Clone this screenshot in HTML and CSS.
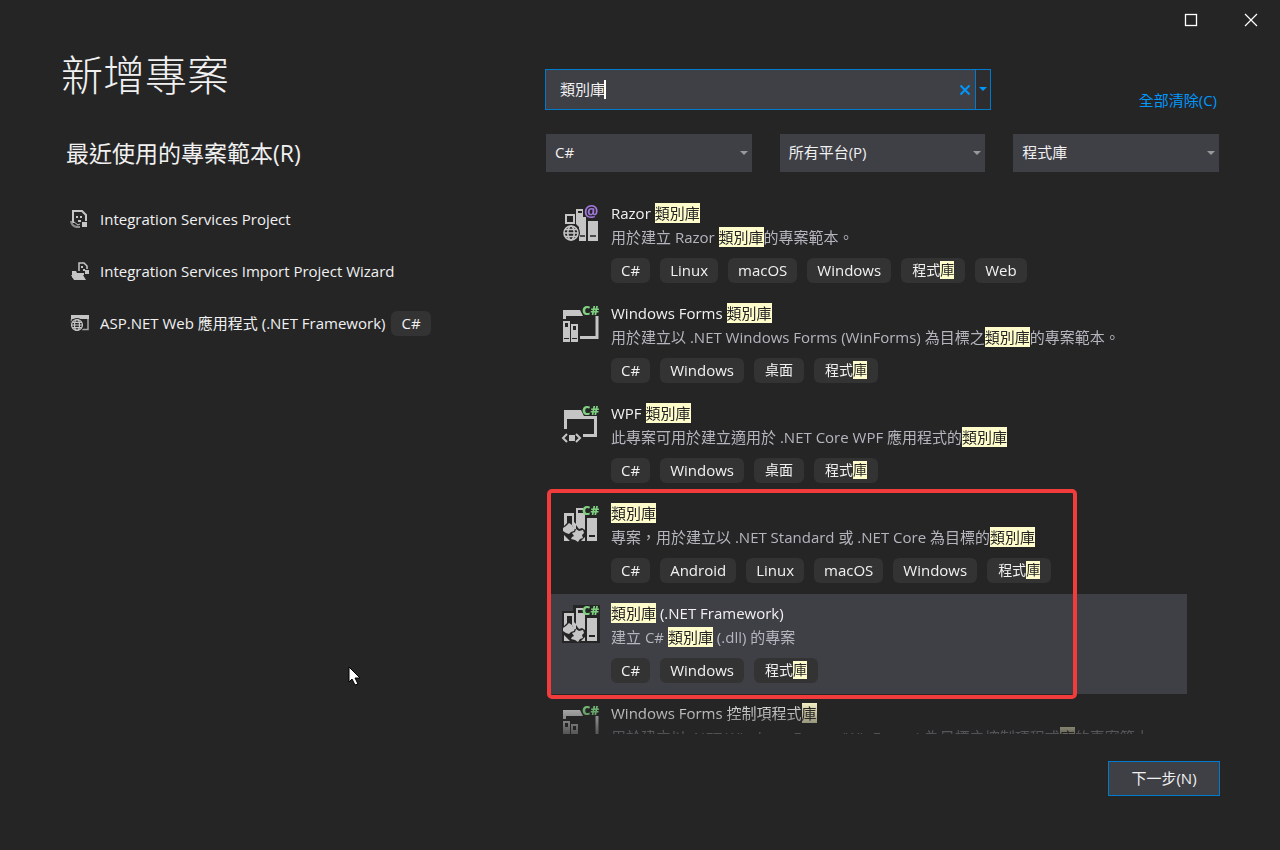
FILE: index.html
```html
<!DOCTYPE html>
<html lang="zh-Hant">
<head>
    <meta charset="UTF-8">
    <meta name="viewport" content="width=device-width, initial-scale=1.0">
    <title>新增專案</title>
    <link rel="stylesheet" href="styles.css">
</head>
<body>
    <!-- Shared icon parts -->
    <svg class="defs" aria-hidden="true">
        <symbol id="books" viewBox="0 0 38 38">
            <path d="M3 9h10v10H3zM5 11v6h6v-6z" fill="#c5c5c5" fill-rule="evenodd"/>
            <path d="M14 4h7v8h3v24h-7V22l-3-3z" fill="#c5c5c5"/>
            <path d="M16 6h4v2h-4z" fill="#252526"/>
            <path d="M26 16h10v20H26z" fill="#c5c5c5"/>
            <path d="M18 31h5M28 31h6" stroke="#252526" stroke-width="1.5"/>
        </symbol>
        <symbol id="globe" viewBox="0 0 18 18">
            <circle cx="9" cy="9" r="9" fill="#252526"/>
            <g fill="none" stroke="#c5c5c5" stroke-width="1.6">
                <circle cx="9" cy="9" r="7"/>
                <ellipse cx="9" cy="9" rx="3.2" ry="7"/>
                <path d="M2 9h14M3 5.500h12M3 12.500h12"/>
            </g>
        </symbol>
        <symbol id="forms" viewBox="0 0 38 38">
            <path d="M1 5h17l3 6H4v3H1z" fill="#c5c5c5"/>
            <path d="M35 11v21.500H18" fill="none" stroke="#c5c5c5" stroke-width="3"/>
            <path d="M1 16h7v21H1zM9 19h7v18H9z" fill="#c5c5c5"/>
            <path d="M3 18h3v4H3zM11 21h3v4h-3zM2 33h5v1H2zM10 33h5v1h-5z" fill="#252526"/>
        </symbol>
        <symbol id="classlib" viewBox="0 0 38 38">
            <path d="M0 6h11V0h27v38H0z" fill="#252526"/>
            <path d="M2 8h10v9l2 2v5h-2l-2-4v-9H5v7l-3 3z" fill="#c5c5c5"/>
            <path d="M14 3h7v2h-5v3h7v17l-3-2-3 1-3-4z" fill="#c5c5c5"/>
            <path d="M25 13h10v23H25z" fill="#c5c5c5"/>
            <path d="M27 31h6" stroke="#252526" stroke-width="2"/>
            <path d="M7 18l3 2 1 2 2 1-1 3-3 1-2 2-3-1-3-2v-3l3-2z" fill="#c5c5c5"/>
            <path d="M14 24l3 2 4-1 1 3-2 2 1 3-3 1-2 3-3-2-4-1 1-2 2-1-2-3 3-1z" fill="#c5c5c5"/>
            <path d="M2 36v-6l6 6zM23 32v4h-4z" fill="#c5c5c5"/>
        </symbol>
    </svg>

    <header class="window-bar">
        <button type="button" aria-label="最大化">
            <svg width="14" height="14" viewBox="0 0 14 14"><rect x="1.500" y="1.500" width="11" height="11" fill="none" stroke="#fff" stroke-width="1.300"/></svg>
        </button>
        <button type="button" aria-label="關閉">
            <svg width="14" height="14" viewBox="0 0 14 14"><path d="M1 1l12 12M13 1L1 13" stroke="#fff" stroke-width="1.200"/></svg>
        </button>
    </header>

    <main class="dialog">
        <section class="recent">
            <h1>新增專案</h1>
            <h2>最近使用的專案範本(R)</h2>
            <ul class="recent-list">
                <li>
                    <svg width="20" height="20" viewBox="0 0 20 20">
                        <path d="M3 14V2h9l4 4v6" fill="none" stroke="#c5c5c5" stroke-width="2"/>
                        <path d="M6 7h2v2H6zM10 7h2v2h-2zM8 11h3v2H8z" fill="#c5c5c5"/>
                        <path d="M1 12c1 6 5 6 9 6" fill="none" stroke="#8d8d8d" stroke-width="2"/>
                        <path d="M4 13l4 3 2-1" fill="none" stroke="#c5c5c5"/>
                        <path d="M12 13h5v5h-5z" fill="#c5c5c5"/>
                    </svg>
                    <a href="#">Integration Services Project</a>
                </li>
                <li>
                    <svg width="20" height="20" viewBox="0 0 20 20">
                        <path d="M9 10V2h5l3 3v3" fill="none" stroke="#c5c5c5" stroke-width="1.500"/>
                        <path d="M11 5h2v2h-2zM13 8h2v2h-2zM15 9h4v4h-4z" fill="#c5c5c5"/>
                        <path d="M2 10h4l1 2h7v2H5l-3 3zM1 14h12l3 5H4z" fill="#c5c5c5"/>
                    </svg>
                    <a href="#">Integration Services Import Project Wizard</a>
                </li>
                <li>
                    <svg width="20" height="20" viewBox="0 0 20 20">
                        <path d="M1 2h18v4H1z" fill="#c5c5c5"/>
                        <path d="M1.500 6v5M18 6v10.500h-6" fill="none" stroke="#a5a5a5" stroke-width="1.500"/>
                        <use href="#globe" x="0" y="5" width="14" height="14"/>
                    </svg>
                    <a href="#">ASP.NET Web 應用程式 (.NET Framework)</a>
                    <span class="tag">C#</span>
                </li>
            </ul>
        </section>

        <section class="browse">
            <div class="search-row">
                <div class="search-box">
                    <input type="text" value="類別庫" size="6" aria-label="搜尋範本">
                    <span class="caret"></span>
                    <button type="button" class="clear-text" aria-label="清除">
                        <svg width="12" height="12" viewBox="0 0 12 12"><path d="M1.500 1.500l9 9M10.500 1.500l-9 9" stroke="#0097fb" stroke-width="2"/></svg>
                    </button>
                    <button type="button" class="history" aria-label="搜尋記錄">
                        <svg width="8" height="5" viewBox="0 0 8 5"><path d="M0 0h8L4 4z" fill="#0097fb"/></svg>
                    </button>
                </div>
                <a class="clear-all" href="#">全部清除(C)</a>
            </div>

            <div class="filters">
                <div class="filter">
                    <select aria-label="語言"><option>C#</option></select>
                    <svg width="8" height="5" viewBox="0 0 8 5"><path d="M0 0h8L4 4z" fill="#999"/></svg>
                </div>
                <div class="filter">
                    <select aria-label="平台"><option>所有平台(P)</option></select>
                    <svg width="8" height="5" viewBox="0 0 8 5"><path d="M0 0h8L4 4z" fill="#999"/></svg>
                </div>
                <div class="filter">
                    <select aria-label="專案類型"><option>程式庫</option></select>
                    <svg width="8" height="5" viewBox="0 0 8 5"><path d="M0 0h8L4 4z" fill="#999"/></svg>
                </div>
            </div>

            <div class="results">
                <ul class="template-list">
                    <li class="template">
                        <svg class="icon" viewBox="0 0 38 38">
                            <use href="#books" width="38" height="38"/>
                            <use href="#globe" x="0" y="19" width="18" height="18"/>
                            <circle cx="30" cy="7" r="8" fill="#252526"/>
                            <text class="at-text" x="22" y="12" fill="#a179dc">@</text>
                        </svg>
                        <div class="info">
                            <h3>Razor <mark>類別庫</mark></h3>
                            <p>用於建立 Razor <mark>類別庫</mark>的專案範本。</p>
                            <div class="tags">
                                <span class="tag">C#</span>
                                <span class="tag">Linux</span>
                                <span class="tag">macOS</span>
                                <span class="tag">Windows</span>
                                <span class="tag zh">程式<mark>庫</mark></span>
                                <span class="tag">Web</span>
                            </div>
                        </div>
                    </li>
                    <li class="template">
                        <svg class="icon" viewBox="0 0 38 38">
                            <use href="#forms" width="38" height="38"/>
                            <text class="badge-text" x="20" y="10" fill="#7fd081">C#</text>
                        </svg>
                        <div class="info">
                            <h3>Windows Forms <mark>類別庫</mark></h3>
                            <p>用於建立以 .NET Windows Forms (WinForms) 為目標之<mark>類別庫</mark>的專案範本。</p>
                            <div class="tags">
                                <span class="tag">C#</span>
                                <span class="tag">Windows</span>
                                <span class="tag zh">桌面</span>
                                <span class="tag zh">程式<mark>庫</mark></span>
                            </div>
                        </div>
                    </li>
                    <li class="template">
                        <svg class="icon" viewBox="0 0 38 38">
                            <path d="M2 5h17l3 6h13v21H21v-3h11V14H5v10H2z" fill="#c5c5c5"/>
                            <path d="M20 0h18v11H22z" fill="#252526"/>
                            <path d="M5 29l-4 4 4 4M14 29l4 4-4 4" fill="none" stroke="#c5c5c5" stroke-width="2"/>
                            <path d="M7 30h6v6H7z" fill="#c5c5c5"/>
                            <text class="badge-text" x="20" y="10" fill="#7fd081">C#</text>
                        </svg>
                        <div class="info">
                            <h3>WPF <mark>類別庫</mark></h3>
                            <p>此專案可用於建立適用於 .NET Core WPF 應用程式的<mark>類別庫</mark></p>
                            <div class="tags">
                                <span class="tag">C#</span>
                                <span class="tag">Windows</span>
                                <span class="tag zh">桌面</span>
                                <span class="tag zh">程式<mark>庫</mark></span>
                            </div>
                        </div>
                    </li>
                    <li class="template">
                        <svg class="icon" viewBox="0 0 38 38">
                            <use href="#classlib" width="38" height="38"/>
                            <text class="badge-text" x="20" y="10" fill="#7fd081">C#</text>
                        </svg>
                        <div class="info">
                            <h3><mark>類別庫</mark></h3>
                            <p>專案，用於建立以 .NET Standard 或 .NET Core 為目標的<mark>類別庫</mark></p>
                            <div class="tags">
                                <span class="tag">C#</span>
                                <span class="tag">Android</span>
                                <span class="tag">Linux</span>
                                <span class="tag">macOS</span>
                                <span class="tag">Windows</span>
                                <span class="tag zh">程式<mark>庫</mark></span>
                            </div>
                        </div>
                    </li>
                    <li class="template selected">
                        <svg class="icon" viewBox="0 0 38 38">
                            <use href="#classlib" width="38" height="38"/>
                            <text class="badge-text" x="20" y="10" fill="#7fd081">C#</text>
                        </svg>
                        <div class="info">
                            <h3><mark>類別庫</mark> (.NET Framework)</h3>
                            <p>建立 C# <mark>類別庫</mark> (.dll) 的專案</p>
                            <div class="tags">
                                <span class="tag">C#</span>
                                <span class="tag">Windows</span>
                                <span class="tag zh">程式<mark>庫</mark></span>
                            </div>
                        </div>
                    </li>
                    <li class="template">
                        <svg class="icon" viewBox="0 0 38 38">
                            <use href="#forms" width="38" height="38"/>
                            <text class="badge-text" x="20" y="10" fill="#7fd081">C#</text>
                        </svg>
                        <div class="info">
                            <h3>Windows Forms 控制項程式<mark>庫</mark></h3>
                            <p>用於建立以 .NET Windows Forms (WinForms) 為目標之控制項程式<mark>庫</mark>的專案範本。</p>
                        </div>
                    </li>
                </ul>
                <div class="highlight-box"></div>
            </div>
        </section>
    </main>

    <footer class="actions">
        <button type="button" class="next">下一步(N)</button>
    </footer>

    <svg class="pointer" width="13" height="20" viewBox="0 0 13 20" aria-hidden="true">
        <path d="M1 1v15l3-3 3 6 3-1-3-6h5z" fill="#fff" stroke="#000"/>
    </svg>
</body>
</html>
```
FILE: styles.css
```css
* {
    margin: 0;
    padding: 0;
    box-sizing: border-box;
}

body {
    background: #252526;
    color: #f1f1f1;
    font-family: "Open Sans", "Noto Sans CJK TC", sans-serif;
    font-size: 15px;
    line-height: 20px;
    height: 100vh;
    display: flex;
    flex-direction: column;
    overflow: hidden;
    position: relative;
}

ul {
    list-style: none;
}

a {
    color: inherit;
    text-decoration: none;
}

button, input, select {
    font: inherit;
    color: inherit;
    background: none;
    border: none;
    outline: none;
}

.defs {
    position: absolute;
    width: 0;
    height: 0;
}

/* Window buttons */
.window-bar {
    display: flex;
    justify-content: flex-end;
    height: 40px;
}

.window-bar button {
    width: 60px;
    padding-left: 2px;
    display: flex;
    justify-content: center;
    align-items: center;
}

.dialog {
    flex: 1;
    min-height: 0;
    display: grid;
    grid-template-columns: 484px minmax(0, 1fr);
    padding: 0 61px;
}

/* Recent templates */
h1 {
    font-size: 42px;
    font-weight: 300;
    line-height: 60px;
    margin-top: 5px;
}

h2 {
    font-size: 23px;
    font-weight: 400;
    line-height: 32px;
    margin: 32px 0 0 5px;
}

.recent-list {
    padding: 24px 0 0 9px;
}

.recent-list li {
    display: flex;
    align-items: center;
    height: 52px;
}

.recent-list svg {
    margin-right: 10px;
}

.recent-list .tag {
    margin-left: 6px;
}

/* Search */
.browse {
    display: flex;
    flex-direction: column;
    min-height: 0;
    padding-top: 29px;
}

.search-row {
    display: flex;
    justify-content: space-between;
    align-items: flex-end;
}

.search-box {
    display: flex;
    align-items: center;
    width: 446px;
    height: 41px;
    padding-left: 14px;
    background: #3f3f46;
    border: 1px solid #007acc;
}

.search-box input {
    field-sizing: content;
    padding-bottom: 2px;
}

.caret {
    width: 2px;
    height: 19px;
    margin-left: -1px;
    background: #fff;
}

.clear-text {
    display: flex;
    margin: 0 4px 0 auto;
}

.history {
    display: flex;
    align-items: center;
    justify-content: center;
    align-self: stretch;
    width: 15px;
    background: #2d2d30;
    border-left: 1px solid #007acc;
}

.clear-all {
    padding-right: 2px;
    color: #0097fb;
}

.filters {
    display: grid;
    grid-template-columns: repeat(3, 1fr);
    gap: 28px;
    margin: 24px 0 0 1px;
}

.filter {
    display: flex;
    align-items: center;
    height: 38px;
    padding-right: 4px;
    background: #3f3f46;
}

.filter select {
    flex: 1;
    appearance: none;
    height: 38px;
    padding: 0 0 2px 9px;
}

/* Template list */
.results {
    flex: 1;
    min-height: 0;
    position: relative;
    margin: 22px 32px 0 3px;
}

.template-list {
    height: 100%;
    overflow: hidden;
    mask-image: linear-gradient(to bottom, #000 calc(100% - 34px), rgba(0, 0, 0, 0.3));
}

.template {
    display: flex;
    gap: 11px;
    height: 100px;
    padding: 9px 0 0 14px;
    white-space: nowrap;
}

.template.selected {
    background: #3f3f46;
}

.icon {
    width: 38px;
    height: 38px;
    margin-top: 2px;
    overflow: visible;
}

.badge-text {
    font-size: 13px;
    font-weight: 800;
}

.at-text {
    font-size: 16px;
    font-weight: 700;
}

h3 {
    font-size: 15px;
    font-weight: 400;
}

.info p {
    margin-top: 4px;
    color: #b5b5be;
}

mark {
    display: inline-block;
    height: 20px;
    vertical-align: top;
    background: #fffccc;
    color: #252526;
}

.tags {
    display: flex;
    gap: 10px;
    margin-top: 11px;
}

.tag {
    height: 25px;
    line-height: 24px;
    padding: 0 10px;
    border-radius: 6px;
    background: #333334;
    color: #f1f1f1;
}

.tag.zh {
    padding: 0 11px;
    font-size: 14px;
}

.tag mark {
    height: 18px;
    line-height: 18px;
    margin-top: 3px;
}

.highlight-box {
    position: absolute;
    top: 295px;
    left: -1px;
    width: 530px;
    height: 210px;
    border: 4px solid #f23c3c;
    border-radius: 5px;
}

/* Footer */
.actions {
    display: flex;
    justify-content: flex-end;
    padding: 27px 60px 54px;
}

.next {
    width: 112px;
    height: 35px;
    padding-bottom: 2px;
    background: #3f3f46;
    border: 1px solid #007acc;
}

.pointer {
    position: absolute;
    left: 348px;
    top: 666px;
}
```
